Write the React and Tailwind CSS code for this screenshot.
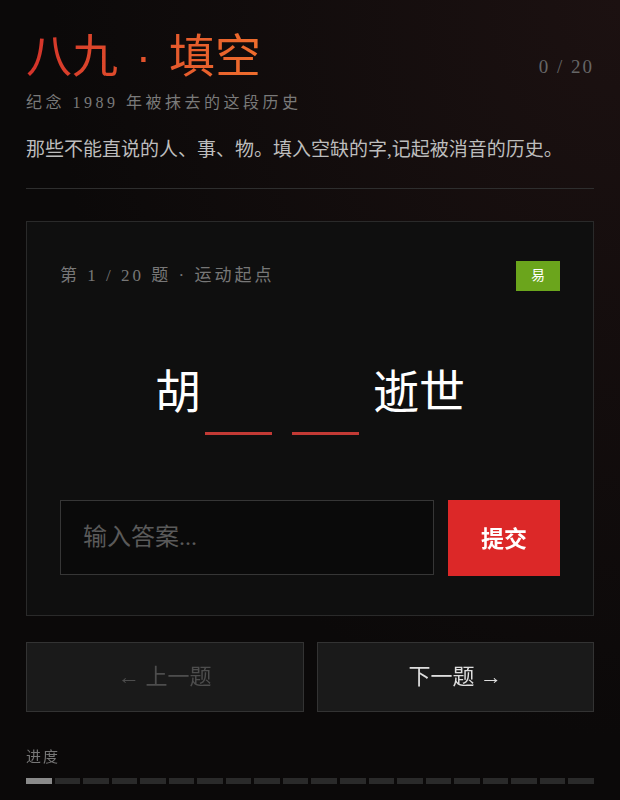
import React from 'react';

const serif = { fontFamily: '"Liberation Serif", "Noto Sans CJK SC", serif' };

const App = () => {
    const total = 20;
    const current = 1;

    return (
        <div
            className="min-h-screen w-full bg-[#0b0909] bg-[radial-gradient(ellipse_at_top_right,#1c1111_0%,#0b0909_65%)] text-white px-[26px] pt-[22px]"
            style={serif}
        >
            {/* Header */}
            <div className="flex items-end justify-between">
                <h1 className="text-[46px] leading-[60px] bg-gradient-to-r from-[#d4322a] to-[#ee6d2d] bg-clip-text text-transparent" style={{ fontFamily: '"Noto Sans CJK SC", sans-serif' }}>
                    八九<span className="mx-[5px]" style={{ fontFamily: '"Liberation Sans", sans-serif' }}> · </span>填空
                </h1>
                <span className="text-[19px] tracking-[2px] text-[#666] mb-[5px]">0 / 20</span>
            </div>
            <p className="mt-[5px] text-[16px] tracking-[3.5px] text-[#7a7a7a]">纪念 1989 年被抹去的这段历史</p>
            <p className="mt-[21px] text-[19px] text-[#bdbdbd]">那些不能直说的人、事、物。填入空缺的字,记起被消音的历史。</p>
            <div className="mt-[23px] h-px bg-[#2e2e2e]" />

            {/* Question card */}
            <div className="mt-[32px] border border-[#2a2a2a] bg-[#0f0f0f] px-[33px] pt-[39px] pb-[39px]">
                <div className="flex items-center justify-between">
                    <span className="text-[17px] tracking-[3px] text-[#777]">第 1 / 20 题 · 运动起点</span>
                    <span className="flex h-[30px] w-[44px] items-center justify-center bg-[#6ba51c] text-[14px] text-white">易</span>
                </div>

                <div className="mt-[79px] flex items-end justify-center text-[46px] leading-none text-white">
                    <span className="mb-[19px]">胡</span>
                    <span className="ml-[4px] h-[3px] w-[67px] bg-[#c23a35]" />
                    <span className="ml-[20px] h-[3px] w-[67px] bg-[#c23a35]" />
                    <span className="ml-[14px] mb-[19px]">逝世</span>
                </div>

                <div className="mt-[65px] flex gap-[14px]">
                    <input
                        type="text"
                        autoFocus
                        placeholder="输入答案..."
                        className="h-[75px] flex-1 min-w-0 border border-[#363636] bg-[#0a0a0a] pl-[22px] text-[24px] text-white caret-white outline-none placeholder:text-[#5a5a5a]"
                        style={serif}
                    />
                    <button className="h-[76px] w-[112px] bg-[#dc2828] text-[23px] font-bold text-white" style={{ fontFamily: '"Noto Sans CJK SC", sans-serif' }}>
                        提交
                    </button>
                </div>
            </div>

            {/* Navigation */}
            <div className="mt-[26px] grid grid-cols-2 gap-[13px]">
                <button disabled className="h-[70px] border border-[#333] bg-[#1a1a1a] text-[22px] text-[#4d4d4d]" style={serif}>
                    ← 上一题
                </button>
                <button className="h-[70px] border border-[#333] bg-[#1a1a1a] text-[22px] text-[#dedede]" style={serif}>
                    下一题 →
                </button>
            </div>

            {/* Progress */}
            <p className="mt-[34px] text-[15px] tracking-[2px] text-[#777]">进度</p>
            <div className="mt-[10px] flex gap-[3px]">
                {Array.from({ length: total }).map((_, i) => (
                    <div key={i} className={i < current ? 'h-[6px] flex-1 bg-[#8a8a8a]' : 'h-[6px] flex-1 bg-[#2a2a2a]'} />
                ))}
            </div>
        </div>
    );
};

export default App;
